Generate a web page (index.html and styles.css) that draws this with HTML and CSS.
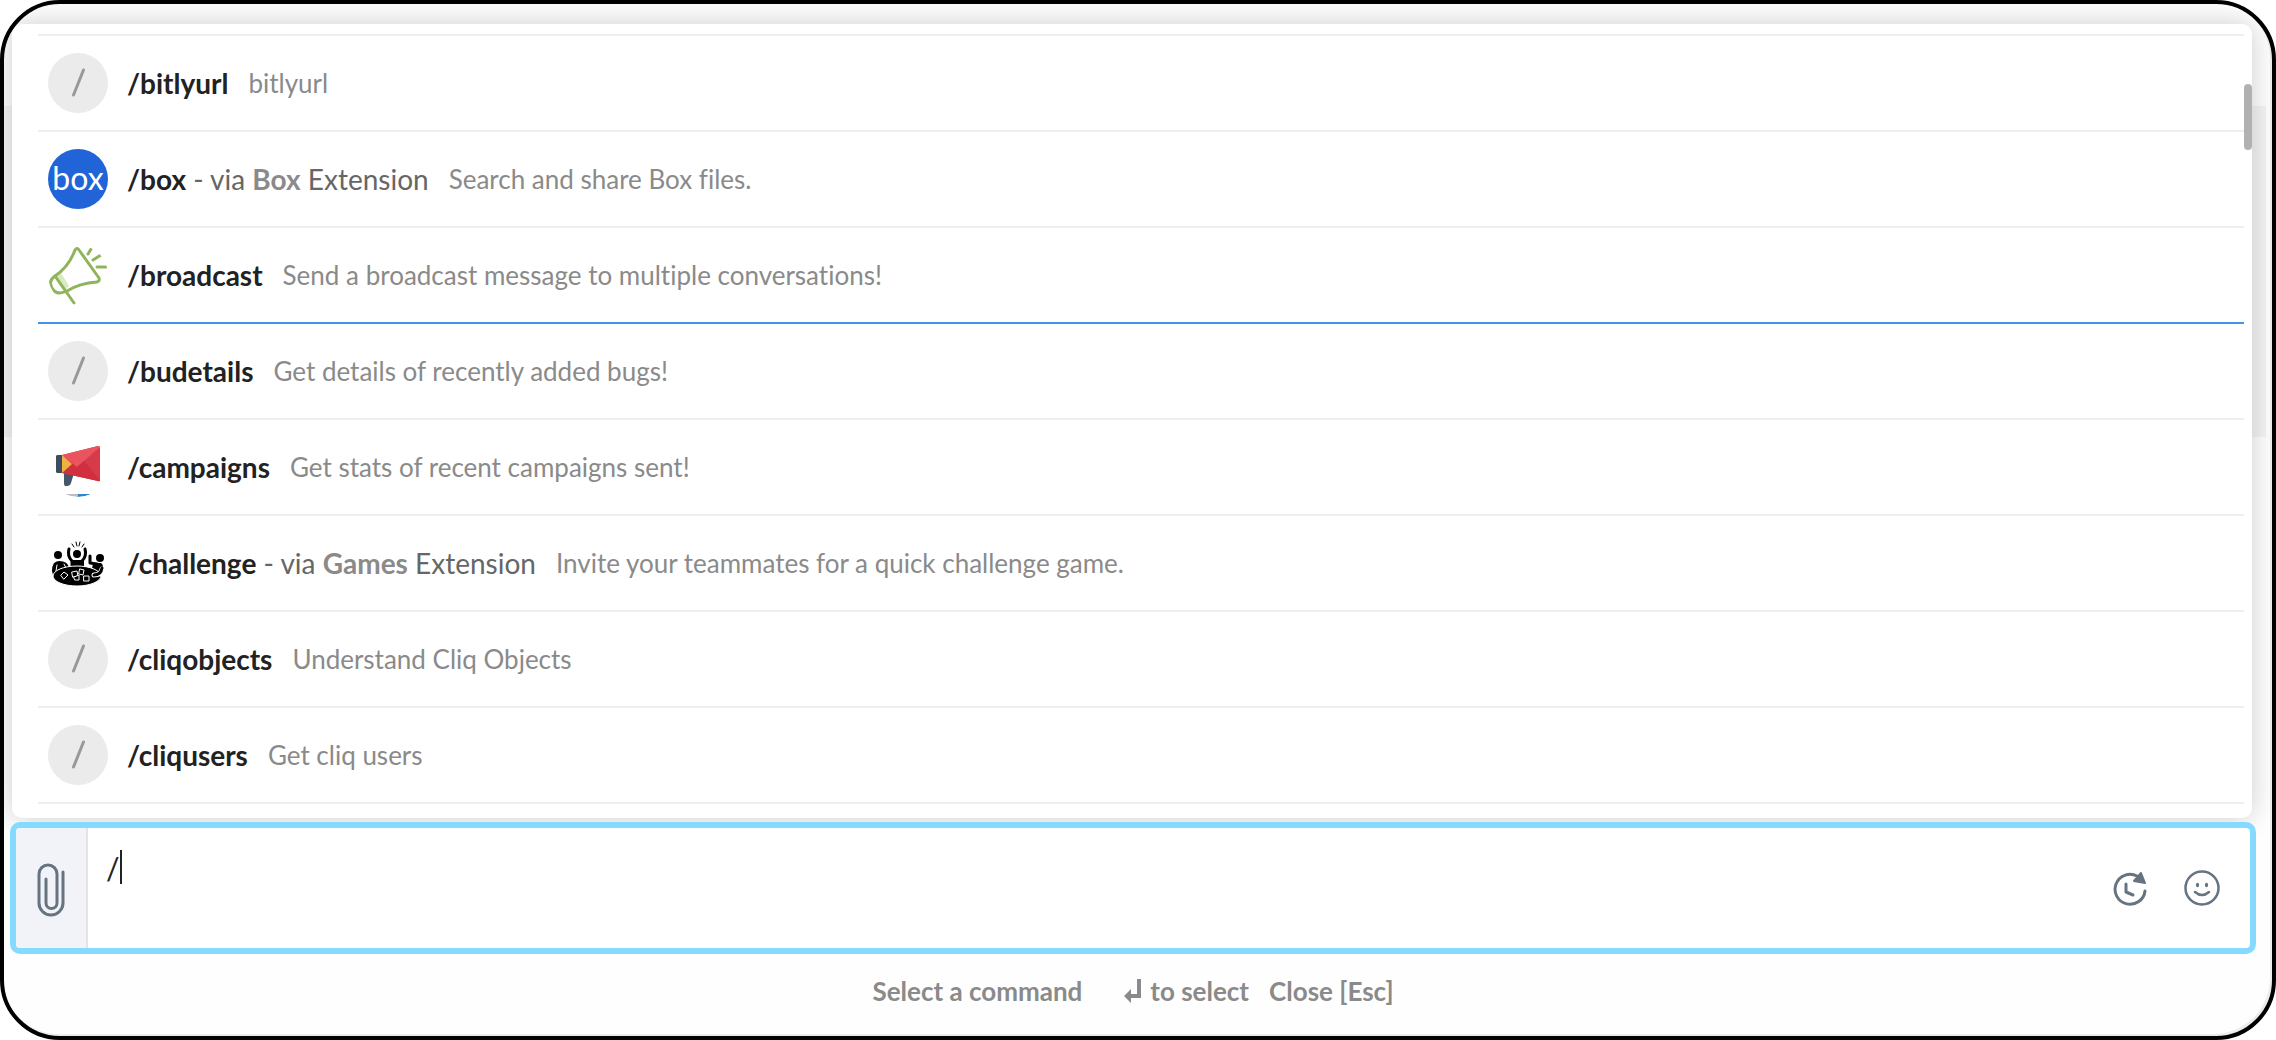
FILE: index.html
```html
<!DOCTYPE html>
<html lang="en">
<head>
  <meta charset="UTF-8">
  <title>Select a command</title>
  <meta name="viewport" content="width=device-width, initial-scale=1.0">
  <link rel="stylesheet" href="styles.css">
</head>
<body>

  <main class="frame">
    <section class="command-panel">
      <ul class="command-list" role="listbox" aria-label="Commands">
        <li class="command" role="option">
          <span class="command-icon slash"><svg viewBox="0 0 60 60"><path d="M25.500 42L35.500 17"/></svg></span>
          <span class="command-name"><b>/bitlyurl</b></span>
          <span class="command-desc">bitlyurl</span>
        </li>
        <li class="command" role="option">
          <span class="command-icon box-logo">box</span>
          <span class="command-name"><b>/box</b> - via <strong>Box</strong> Extension</span>
          <span class="command-desc">Search and share Box files.</span>
        </li>
        <li class="command selected" role="option" aria-selected="true">
          <span class="command-icon">
            <svg viewBox="0 -2 60 60" fill="none" stroke="#8fb45c" stroke-width="3" stroke-linecap="round" stroke-linejoin="round">
              <path d="M8 30L13 26L21 39L16 44Z" fill="#d9eabf" stroke="none"/>
              <path d="M27 3Q29 0 31 3L51 31Q52 34 49 35C36 36 27 39 19 44Q8 49 4 41Q0 34 7 29C16 23 23 14 27 3Z"/>
              <path d="M7 29L26 56"/>
              <path d="M40 7L43 2M45 13L53 8M49 20H59"/>
            </svg>
          </span>
          <span class="command-name"><b>/broadcast</b></span>
          <span class="command-desc">Send a broadcast message to multiple conversations!</span>
        </li>
        <li class="command" role="option">
          <span class="command-icon slash"><svg viewBox="0 0 60 60"><path d="M25.500 42L35.500 17"/></svg></span>
          <span class="command-name"><b>/budetails</b></span>
          <span class="command-desc">Get details of recently added bugs!</span>
        </li>
        <li class="command" role="option">
          <span class="command-icon">
            <svg viewBox="0 0 60 60">
              <path d="M16 34L26 36L23 46Q22 49 19 49H17Q16 49 16 46Z" fill="#46566a"/>
              <path d="M8 19Q8 18 10 18H14V36H10Q8 36 8 35Z" fill="#3d4d5f"/>
              <path d="M14 18L50 9Q52 9 52 11V43Q52 45 50 44L14 36Z" fill="#d73a48"/>
              <path d="M14 18L50 9Q52 9 52 10L29 30Z" fill="#e9545f"/>
              <path d="M36 24L52 43Q52 45 50 44L14 36L24 27L29 30Z" fill="#cf2f3f"/>
              <path d="M14 18L24 27L14 36Z" fill="#edb242"/>
              <path d="M17 57H30V60Q23 60 17 57Z" fill="#bdbdbd"/>
              <path d="M30 57H43Q37 60 30 60Z" fill="#2f86cf"/>
            </svg>
          </span>
          <span class="command-name"><b>/campaigns</b></span>
          <span class="command-desc">Get stats of recent campaigns sent!</span>
        </li>
        <li class="command" role="option">
          <span class="command-icon">
            <svg viewBox="0 0 60 60" stroke-linecap="round" stroke-linejoin="round">
              <circle cx="10" cy="22" r="4"/>
              <circle cx="29" cy="21" r="4"/>
              <circle cx="52" cy="25" r="4"/>
              <path d="M4 38Q4 28 11 28Q20 28 21 35Q10 36 5 42Z"/>
              <path d="M9 32L8 38M16 31L18 35" stroke="#fff" stroke-width="1"/>
              <path d="M21 16Q19 23 24 28V33M37 16Q39 23 34 28V33" fill="none" stroke="#000" stroke-width="3"/>
              <path d="M23 27H36V33H23Z"/>
              <path d="M24 11L26 14M28 9L29 13M32 9L31 13M36 11L34 14" stroke="#000" stroke-width="1"/>
              <path d="M42 23V30L49 31" fill="none" stroke="#000" stroke-width="3"/>
              <path d="M45 30H53Q56 32 55 39L50 42L44 36Z"/>
              <ellipse cx="29" cy="43" rx="24" ry="10" stroke="#fff" stroke-width="1"/>
              <path d="M54 36Q53 42 46 42" fill="none" stroke="#fff" stroke-width="5"/>
              <path d="M54 35Q53 42 46 42" fill="none" stroke="#000" stroke-width="3"/>
              <g fill="#000" stroke="#fff" stroke-width="1">
                <path d="M13 42L16 39L20 42L16 46Z"/>
                <path d="M24 39L29 38L30 43L25 44Z"/>
                <path d="M32 36L36 37L35 42L31 41Z"/>
                <path d="M26 44L31 42L31 47L27 47Z"/>
                <path d="M36 43H41V48H36Z"/>
              </g>
            </svg>
          </span>
          <span class="command-name"><b>/challenge</b> - via <strong>Games</strong> Extension</span>
          <span class="command-desc">Invite your teammates for a quick challenge game.</span>
        </li>
        <li class="command" role="option">
          <span class="command-icon slash"><svg viewBox="0 0 60 60"><path d="M25.500 42L35.500 17"/></svg></span>
          <span class="command-name"><b>/cliqobjects</b></span>
          <span class="command-desc">Understand Cliq Objects</span>
        </li>
        <li class="command" role="option">
          <span class="command-icon slash"><svg viewBox="0 0 60 60"><path d="M25.500 42L35.500 17"/></svg></span>
          <span class="command-name"><b>/cliqusers</b></span>
          <span class="command-desc">Get cliq users</span>
        </li>
      </ul>
      <div class="scroll-thumb"></div>
    </section>

    <div class="composer">
      <button class="attach-btn" aria-label="Attach file">
        <svg width="28" height="54" viewBox="0 0 28 54" fill="none" stroke="#667380" stroke-width="3" stroke-linecap="round">
          <path d="M26 9V40A12 12 0 0 1 2 40V11A9 9 0 0 1 20 11V40A5 5 0 0 1 9 40V16"/>
        </svg>
      </button>
      <div class="input-wrap">
        <textarea class="message-input" aria-label="Message">/</textarea>
        <span class="caret"></span>
      </div>
      <div class="composer-actions">
        <button aria-label="Reminder">
          <svg width="36" height="36" viewBox="0 0 36 36" fill="none" stroke="#667380" stroke-width="3" stroke-linecap="round" stroke-linejoin="round">
            <path d="M25 6A15 15 0 1 0 33 21"/>
            <path d="M14 14V22L21 25"/>
            <path d="M29 3L33 13L22 11Z" fill="#667380" stroke-width="2"/>
          </svg>
        </button>
        <button aria-label="Emoji">
          <svg width="36" height="36" viewBox="0 0 36 36" fill="none" stroke="#667380" stroke-width="2.500" stroke-linecap="round">
            <circle cx="18" cy="18" r="16.500"/>
            <path d="M11 22Q18 28 25 22"/>
            <g fill="#667380" stroke="none">
              <ellipse cx="13.500" cy="15" rx="1.600" ry="2.200"/>
              <ellipse cx="22.500" cy="15" rx="1.600" ry="2.200"/>
            </g>
          </svg>
        </button>
      </div>
    </div>

    <footer class="hints">
      <span class="hint-title">Select a command</span>
      <span class="hint-enter">
        <svg width="18" height="24" viewBox="0 0 18 24"><path d="M13 0H17V19H7V24L0 17L7 10V15H13Z" fill="#8a8a8a"/></svg>
        to select
      </span>
      <button>Close [Esc]</button>
    </footer>
  </main>

</body>
</html>
```
FILE: styles.css
```css
* {
  box-sizing: border-box;
  margin: 0;
  padding: 0;
}

body {
  font-family: Lato, sans-serif;
  font-variant-ligatures: none;
  background-color: #fff;
  color: #222;
}

button,
textarea {
  font-family: inherit;
  border: none;
  background: none;
  outline: none;
}

button {
  cursor: pointer;
}

svg {
  display: block;
}

.frame {
  display: flex;
  flex-direction: column;
  min-height: 100vh;
  padding: 20px 16px 0 6px;
  border: 4px solid #000;
  border-radius: 60px;
  overflow: hidden;
  background: linear-gradient(#f4f4f4, #f4f4f4) no-repeat 0 102px / calc(100% - 6px) 331px;
  background-color: #fefefe;
  box-shadow: inset -2px -2px 0 #ebebf0;
}

.command-panel {
  position: relative;
  margin: 0 4px 4px 2px;
  padding: 10px 8px 14px 26px;
  background-color: #fff;
  border-radius: 10px;
  box-shadow: 0 0 28px rgba(0, 0, 0, 0.2);
}

.command-list {
  list-style: none;
  border-top: 2px solid #ededf3;
}

.command {
  display: flex;
  align-items: center;
  height: 96px;
  padding-left: 10px;
  border-bottom: 2px solid #ededf3;
}

.command.selected {
  border-bottom-color: #4394e4;
}

.command-icon {
  flex: none;
  width: 60px;
  height: 60px;
  margin-right: 19px;
  border-radius: 50%;
  overflow: hidden;
}

.slash {
  background-color: #ebebeb;
}

.slash path {
  stroke: #999;
  stroke-width: 3;
  stroke-linecap: round;
}

.box-logo {
  background-color: #2164d8;
  color: #fff;
  font-size: 32px;
  line-height: 58px;
  text-align: center;
}

.command-name {
  margin-right: 20px;
  font-size: 28px;
  line-height: 36px;
  color: #666;
}

.command-name b {
  color: #222;
}

.command-name strong {
  color: #8a8a8a;
}

.command-desc {
  font-size: 26px;
  line-height: 36px;
  color: #8a8a8a;
}

.scroll-thumb {
  position: absolute;
  top: 60px;
  right: 0;
  width: 8px;
  height: 66px;
  border-radius: 4px;
  background-color: #b1b1b1;
}

.composer {
  position: relative;
  display: flex;
  height: 132px;
  border: 6px solid #85dbff;
  border-radius: 10px;
  background-color: #fff;
}

.attach-btn {
  display: flex;
  align-items: center;
  justify-content: center;
  width: 72px;
  padding-top: 4px;
  border-right: 2px solid #e4e4e4;
  border-radius: 4px 0 0 4px;
  background-color: #f2f3f8;
}

.input-wrap {
  position: relative;
  flex: 1;
}

.message-input {
  display: block;
  width: 100%;
  height: 100%;
  padding: 20px 18px;
  font-size: 30px;
  line-height: 40px;
  color: #222;
  caret-color: transparent;
  resize: none;
}

.caret {
  position: absolute;
  top: 22px;
  left: 32px;
  width: 2px;
  height: 34px;
  background-color: #222;
}

.composer-actions {
  display: flex;
  align-items: center;
  gap: 36px;
  padding-right: 30px;
}

.hints {
  display: flex;
  align-items: center;
  justify-content: center;
  padding-top: 19px;
  font-size: 26px;
  font-weight: 700;
  line-height: 36px;
  color: #8a8a8a;
}

.hint-title {
  margin-right: 42px;
}

.hint-enter {
  display: flex;
  align-items: center;
  gap: 8px;
  margin-right: 20px;
}

.hints button {
  font-size: 26px;
  font-weight: 700;
  line-height: 36px;
  color: #8a8a8a;
}
```
